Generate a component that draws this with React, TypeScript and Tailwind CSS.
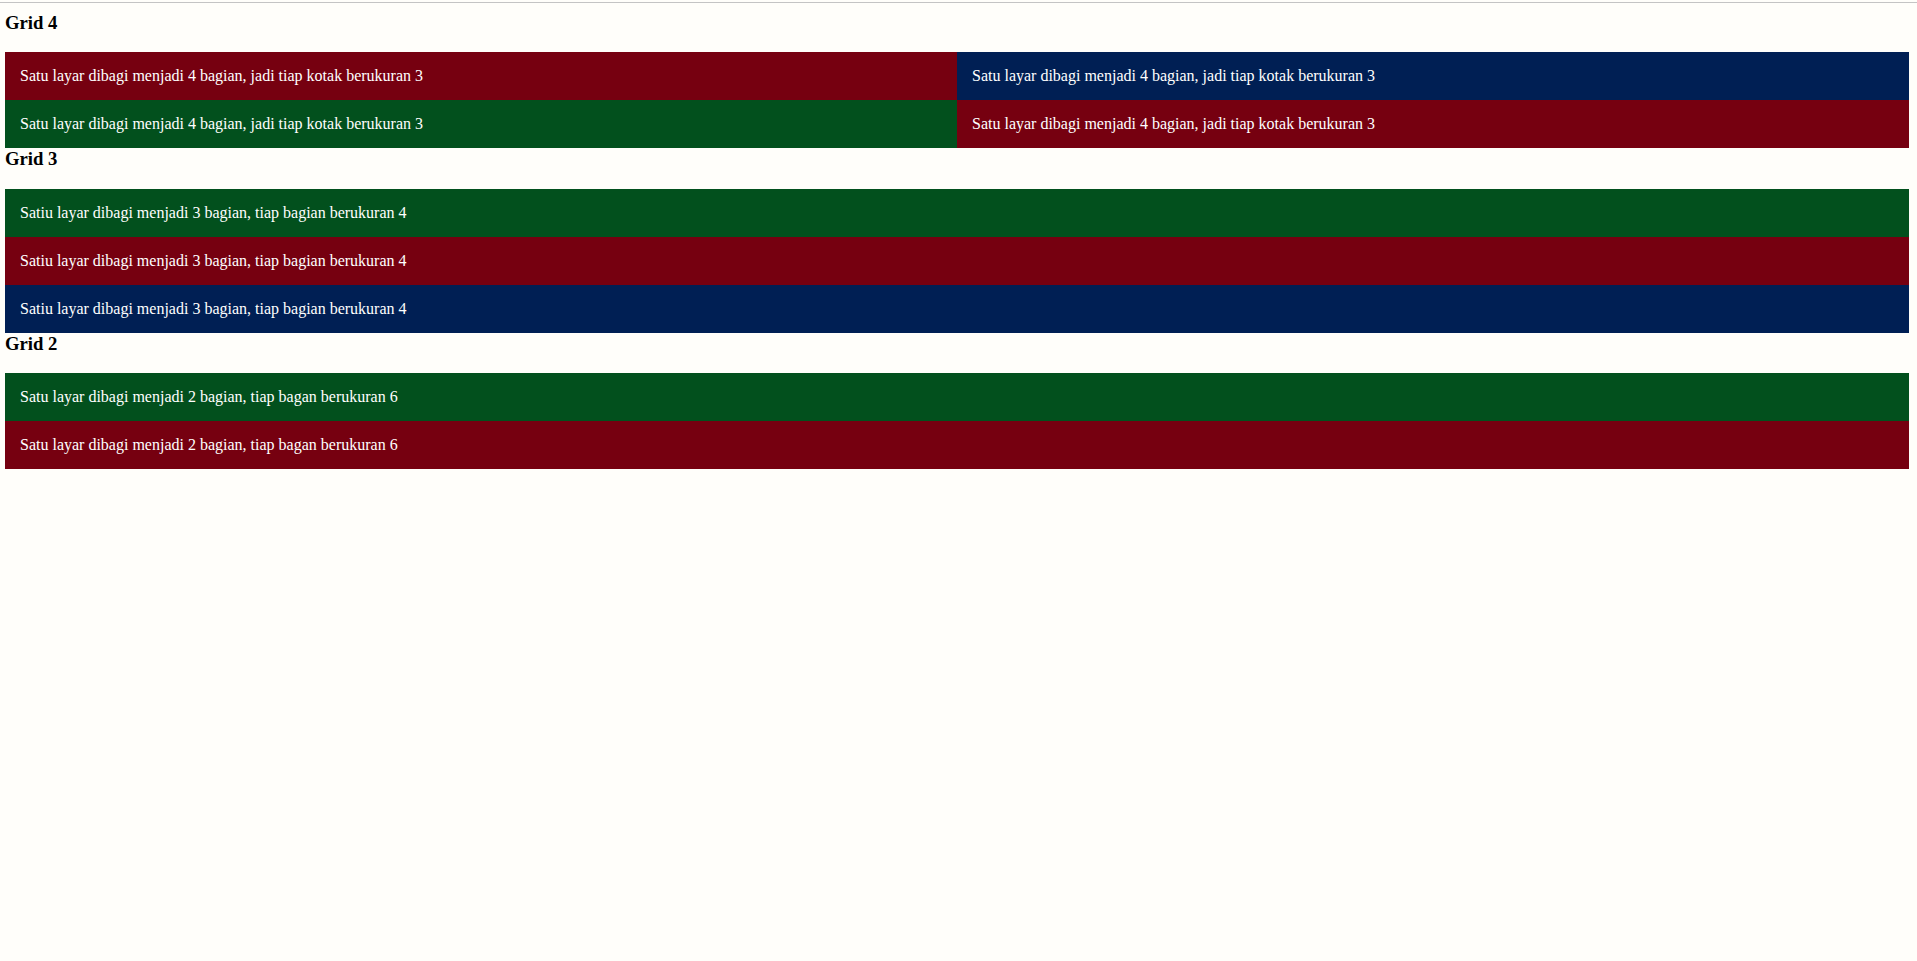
const RED = "bg-[#760010]";
const GREEN = "bg-[#02501d]";
const BLUE = "bg-[#001f54]";

function Cell({ color, text }: { color: string; text: string }) {
  return (
    <div className={`${color} h-12 flex items-center pl-[15px] text-white text-[16px]`}>
      {text}
    </div>
  );
}

function Heading({ children }: { children: string }) {
  return <h3 className="font-bold text-[18.72px] leading-[21.5px] mb-[19px] text-black">{children}</h3>;
}

export default function App() {
  const t4 = "Satu layar dibagi menjadi 4 bagian, jadi tiap kotak berukuran 3";
  const t3 = "Satiu layar dibagi menjadi 3 bagian, tiap bagian berukuran 4";
  const t2 = "Satu layar dibagi menjadi 2 bagian, tiap bagan berukuran 6";

  return (
    <div className="min-h-screen bg-[#fffefa] pt-[2px] font-['Liberation_Serif',serif]">
      <div className="border-t border-[#c4c4c4] pt-[8.5px] pl-[5px]">
        <div className="w-[1904px]">
          <Heading>Grid 4</Heading>
          <div className="grid grid-cols-2">
            <Cell color={RED} text={t4} />
            <Cell color={BLUE} text={t4} />
            <Cell color={GREEN} text={t4} />
            <Cell color={RED} text={t4} />
          </div>

          <Heading>Grid 3</Heading>
          <div className="flex flex-col">
            <Cell color={GREEN} text={t3} />
            <Cell color={RED} text={t3} />
            <Cell color={BLUE} text={t3} />
          </div>

          <Heading>Grid 2</Heading>
          <div className="flex flex-col">
            <Cell color={GREEN} text={t2} />
            <Cell color={RED} text={t2} />
          </div>
        </div>
      </div>
    </div>
  );
}
